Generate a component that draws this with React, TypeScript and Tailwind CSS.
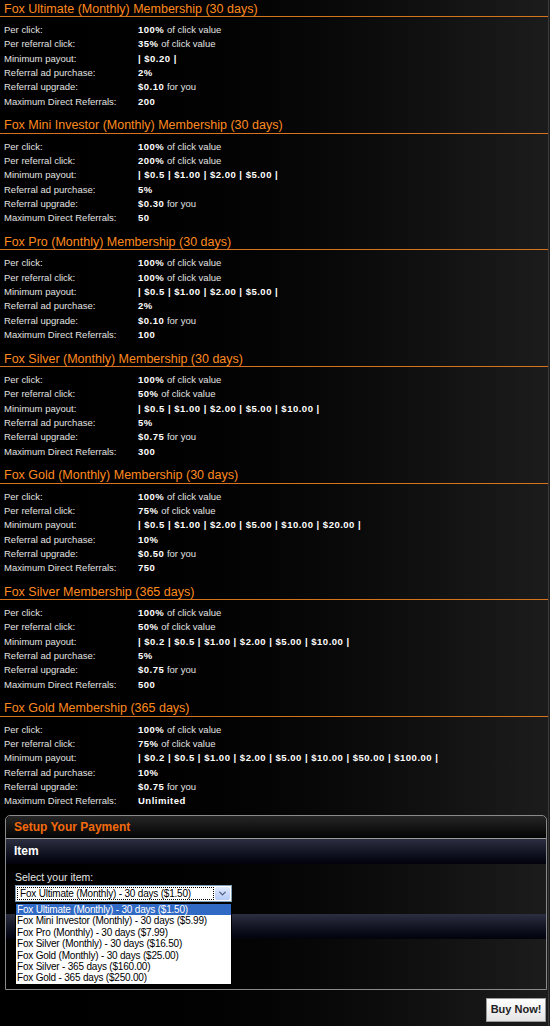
import { ChevronDown } from 'lucide-react';

type Plan = {
  title: string;
  perClick: string;
  perRef: string;
  payout: string;
  adPurchase: string;
  upgrade: string;
  maxRefs: string;
};

const plans: Plan[] = [
  { title: 'Fox Ultimate (Monthly) Membership (30 days)', perClick: '100%', perRef: '35%', payout: '| $0.20 |', adPurchase: '2%', upgrade: '$0.10', maxRefs: '200' },
  { title: 'Fox Mini Investor (Monthly) Membership (30 days)', perClick: '100%', perRef: '200%', payout: '| $0.5 | $1.00 | $2.00 | $5.00 |', adPurchase: '5%', upgrade: '$0.30', maxRefs: '50' },
  { title: 'Fox Pro (Monthly) Membership (30 days)', perClick: '100%', perRef: '100%', payout: '| $0.5 | $1.00 | $2.00 | $5.00 |', adPurchase: '2%', upgrade: '$0.10', maxRefs: '100' },
  { title: 'Fox Silver (Monthly) Membership (30 days)', perClick: '100%', perRef: '50%', payout: '| $0.5 | $1.00 | $2.00 | $5.00 | $10.00 |', adPurchase: '5%', upgrade: '$0.75', maxRefs: '300' },
  { title: 'Fox Gold (Monthly) Membership (30 days)', perClick: '100%', perRef: '75%', payout: '| $0.5 | $1.00 | $2.00 | $5.00 | $10.00 | $20.00 |', adPurchase: '10%', upgrade: '$0.50', maxRefs: '750' },
  { title: 'Fox Silver Membership (365 days)', perClick: '100%', perRef: '50%', payout: '| $0.2 | $0.5 | $1.00 | $2.00 | $5.00 | $10.00 |', adPurchase: '5%', upgrade: '$0.75', maxRefs: '500' },
  { title: 'Fox Gold Membership (365 days)', perClick: '100%', perRef: '75%', payout: '| $0.2 | $0.5 | $1.00 | $2.00 | $5.00 | $10.00 | $50.00 | $100.00 |', adPurchase: '10%', upgrade: '$0.75', maxRefs: 'Unlimited' },
];

const options = [
  'Fox Ultimate (Monthly) - 30 days ($1.50)',
  'Fox Mini Investor (Monthly) - 30 days ($5.99)',
  'Fox Pro (Monthly) - 30 days ($7.99)',
  'Fox Silver (Monthly) - 30 days ($16.50)',
  'Fox Gold (Monthly) - 30 days ($25.00)',
  'Fox Silver - 365 days ($160.00)',
  'Fox Gold - 365 days ($250.00)',
];

function Row({ label, children }: { label: string; children: React.ReactNode }) {
  return (
    <div className="flex h-[14.33px] items-center whitespace-nowrap">
      <div className="w-[134px] text-[#e2e2e2]">{label}</div>
      <div className="text-[#e2e2e2]">{children}</div>
    </div>
  );
}

function V({ children }: { children: React.ReactNode }) {
  return <b className="tracking-[0.5px] text-white">{children}</b>;
}

function PlanBlock({ plan, last }: { plan: Plan; last: boolean }) {
  return (
    <div className={last ? '' : 'pb-[9.67px]'}>
      <div className="flex h-[15px] items-center border-b border-[#d7721f] px-[4px] text-[12.5px] text-[#ff8a1f]">
        {plan.title}
      </div>
      <div className="px-[4px] pt-[6px] text-[9.5px]">
        <Row label="Per click:">
          <V>{plan.perClick}</V> of click value
        </Row>
        <Row label="Per referral click:">
          <V>{plan.perRef}</V> of click value
        </Row>
        <Row label="Minimum payout:">
          <V>{plan.payout}</V>
        </Row>
        <Row label="Referral ad purchase:">
          <V>{plan.adPurchase}</V>
        </Row>
        <Row label="Referral upgrade:">
          <V>{plan.upgrade}</V> for you
        </Row>
        <Row label="Maximum Direct Referrals:">
          <V>{plan.maxRefs}</V>
        </Row>
      </div>
    </div>
  );
}

export default function App() {
  return (
    <div
      className="min-h-[1026px] w-[550px] bg-linear-to-r from-black to-[#1c1c1c] pr-[1px]"
      style={{ fontFamily: '"Liberation Sans", Arial, sans-serif' }}
    >
      <div className="border-r border-[#3a3a3a] pt-[2px]">
        {plans.map((p, i) => (
          <PlanBlock key={p.title} plan={p} last={i === plans.length - 1} />
        ))}

        <div className="ml-[5px] mr-[1px] mt-[6px] rounded-t-[5px] border border-[#8a8a8a]">
          <div className="flex h-[22px] items-center rounded-t-[5px] bg-linear-to-b from-[#262626] to-[#050505] px-[8px] text-[12px] font-bold text-[#f26a0e]">
            Setup Your Payment
          </div>
          <div className="h-px bg-[#9a9a9a]" />
          <div className="flex h-[25px] items-center bg-linear-to-b from-[#2c2f40] to-[#03030d] px-[8px] text-[12px] font-bold text-white">
            Item
          </div>
          <div className="relative px-[9px] pt-[7px]">
            <div className="text-[10.5px] leading-[13px] text-[#e6e6e6]">Select your item:</div>
            <div className="mt-[1px] flex h-[17px] w-[217px] items-center border border-[#7f9db9] bg-white p-[1px]">
              <div className="flex h-full flex-1 items-center whitespace-nowrap border border-dotted border-black px-[2px] text-[10px] tracking-[-0.2px] text-black">
                Fox Ultimate (Monthly) - 30 days ($1.50)
              </div>
              <div className="ml-[1px] flex h-full w-[15px] items-center justify-center rounded-[2px] bg-linear-to-b from-[#dfe8fd] to-[#b6cbf6]">
                <ChevronDown size={11} strokeWidth={3} className="text-[#4d6185]" />
              </div>
            </div>
            <div className="absolute left-[9px] top-[39px] z-10 w-[217px] border border-black bg-white text-[10px] tracking-[-0.2px] text-black">
              {options.map((o, i) => (
                <div
                  key={o}
                  className={
                    i === 0
                      ? 'flex h-[11.43px] items-center whitespace-nowrap bg-[#316ac5] px-[1px] text-white'
                      : 'flex h-[11.43px] items-center whitespace-nowrap px-[1px]'
                  }
                >
                  {o}
                </div>
              ))}
            </div>
            <div className="mx-[-9px] mt-[12px] h-[25px] bg-linear-to-b from-[#2c2f40] to-[#03030d]" />
            <div className="h-[50px]" />
          </div>
        </div>

        <div className="flex justify-end pr-[2px] pt-[8px] pb-[6px]">
          <button className="h-[24px] w-[60px] border border-[#9a9a9a] bg-linear-to-b from-white to-[#e4e4e4] text-[11px] font-bold text-[#222]">
            Buy Now!
          </button>
        </div>
      </div>
    </div>
  );
}
